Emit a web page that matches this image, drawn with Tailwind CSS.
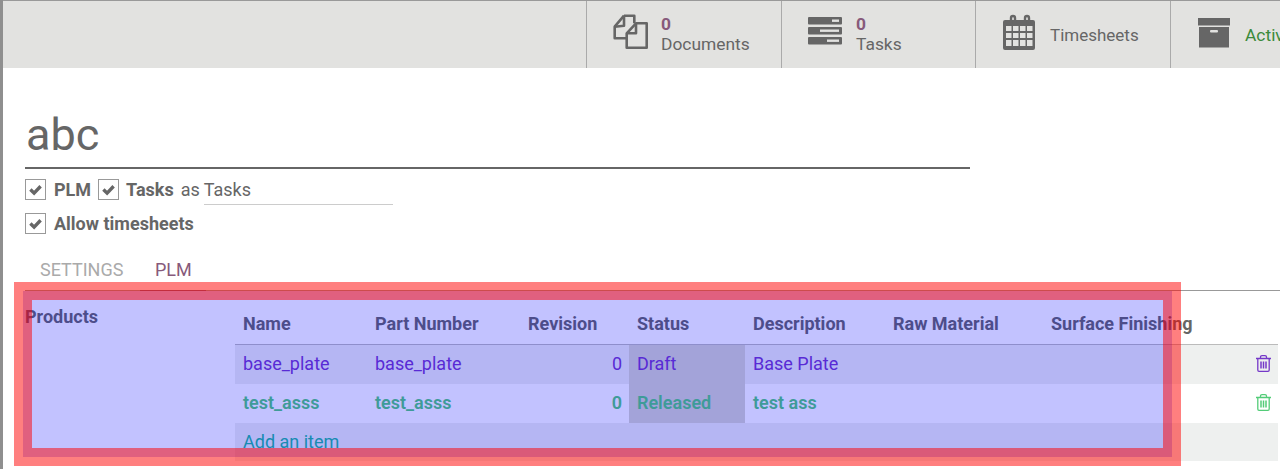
<!DOCTYPE html>
<html lang="en">
<head>
    <meta charset="UTF-8">
    <title>abc - Project</title>
    <script src="https://cdn.jsdelivr.net/npm/@tailwindcss/browser@4"></script>
</head>
<body class="h-[469px] overflow-hidden bg-white font-['Roboto',sans-serif] text-[#666]">
    <div class="relative h-[469px] overflow-hidden border-l-[3px] border-[#8f8f8f]">

        <!-- stat buttons -->
        <div class="flex h-[68px] border-t border-[#999] bg-[#e2e2e0] pl-[583px]">
            <div class="flex w-[195px] shrink-0 items-center border-l border-[#aaa] pl-[26px]">
                <svg class="w-[48px] h-[67px]" viewBox="0 0 48 67" fill="none" stroke="#666" stroke-width="2.6" stroke-linejoin="round">
                    <path d="M11 14.7 H21.3 V22.3"/>
                    <path d="M11 14.7 L1.7 25.7 V37.3 H13"/>
                    <path d="M11 14.7 V24.7 L1.7 25.7"/>
                    <path d="M23 22.3 H33.7 V46.7 H13.7 V32.3 Z"/>
                    <path d="M23 22.3 V32.3 H13.7"/>
                </svg>
                <div class="pb-[2px] text-[17.4px] leading-[20px]">
                    <div class="font-bold text-[#875a7b]">0</div>
                    <div>Documents</div>
                </div>
            </div>
            <div class="flex w-[194px] shrink-0 items-center border-l border-[#aaa] pl-[26px]">
                <svg class="w-[48px] h-[67px]" viewBox="0 0 48 67" fill="#666">
                    <rect x="0" y="16" width="34" height="7.5" rx="1"/>
                    <rect x="0" y="26" width="34" height="7.5" rx="1"/>
                    <rect x="0" y="36" width="34" height="7.5" rx="1"/>
                    <rect x="24" y="18.5" width="7" height="2.4" fill="#e2e2e0"/>
                    <rect x="12" y="28.5" width="19" height="2.4" fill="#e2e2e0"/>
                    <rect x="19" y="38.5" width="12" height="2.4" fill="#e2e2e0"/>
                </svg>
                <div class="pb-[2px] text-[17.4px] leading-[20px]">
                    <div class="font-bold text-[#875a7b]">0</div>
                    <div>Tasks</div>
                </div>
            </div>
            <div class="flex w-[195px] shrink-0 items-center border-l border-[#aaa] pl-[27px]">
                <svg class="w-[47px] h-[67px]" viewBox="0 0 47 67" fill="none">
                    <rect x="0" y="19" width="32" height="30" rx="2" fill="#666"/>
                    <path d="M8 23 V17 Q8 15 10 15 Q12 15 12 17 V23 M22 23 V17 Q22 15 24 15 Q26 15 26 17 V23" stroke="#666" stroke-width="2.4"/>
                    <g fill="#e2e2e0">
                        <rect x="3" y="25" width="5.5" height="5"/><rect x="10" y="25" width="5.5" height="5"/><rect x="17" y="25" width="5.5" height="5"/><rect x="24" y="25" width="5.5" height="5"/>
                        <rect x="3" y="32" width="5.5" height="5"/><rect x="10" y="32" width="5.5" height="5"/><rect x="17" y="32" width="5.5" height="5"/><rect x="24" y="32" width="5.5" height="5"/>
                        <rect x="3" y="39" width="5.5" height="6"/><rect x="10" y="39" width="5.5" height="6"/><rect x="17" y="39" width="5.5" height="6"/><rect x="24" y="39" width="5.5" height="6"/>
                    </g>
                </svg>
                <div class="pt-px text-[17px] leading-[20px]">Timesheets</div>
            </div>
            <div class="flex w-[195px] shrink-0 items-center border-l border-[#aaa] pl-[27px]">
                <svg class="w-[47px] h-[67px]" viewBox="0 0 47 67" fill="#666">
                    <rect x="0" y="17" width="32" height="7.5"/>
                    <rect x="1" y="26" width="30" height="20.5"/>
                    <rect x="12" y="29" width="8" height="2.6" rx="1" fill="#e2e2e0"/>
                </svg>
                <div class="pt-px text-[17.4px] leading-[20px] text-[#3b8a3b]">Active</div>
            </div>
        </div>

        <!-- sheet -->
        <div class="pl-[22px]">
            <div class="w-[945px] border-b-2 border-[#666] pl-px pt-[35px] text-[45px] leading-[64px]">abc</div>

            <div class="mt-[7px] flex h-[27px] items-center text-[18px]">
                <span class="flex h-[21px] w-[21px] items-center justify-center border border-[#999]">
                    <svg class="h-[13px] w-[13px]" viewBox="0 0 14 14" fill="none" stroke="#666" stroke-width="3.6"><path d="M1.5 7 L5.5 11 L12.5 3.5"/></svg>
                </span>
                <span class="ml-[8px] font-bold">PLM</span>
                <span class="ml-[7px] flex h-[21px] w-[21px] items-center justify-center border border-[#999]">
                    <svg class="h-[13px] w-[13px]" viewBox="0 0 14 14" fill="none" stroke="#666" stroke-width="3.6"><path d="M1.5 7 L5.5 11 L12.5 3.5"/></svg>
                </span>
                <span class="ml-[7px] font-bold">Tasks</span>
                <span class="ml-[7px]">as</span>
                <span class="ml-[4px] mt-[2px] h-[29px] w-[189px] border-b border-[#ccc] leading-[27px]">Tasks</span>
            </div>

            <div class="mt-[10px] flex h-[21px] items-center text-[18px]">
                <span class="flex h-[21px] w-[21px] items-center justify-center border border-[#999]">
                    <svg class="h-[13px] w-[13px]" viewBox="0 0 14 14" fill="none" stroke="#666" stroke-width="3.6"><path d="M1.5 7 L5.5 11 L12.5 3.5"/></svg>
                </span>
                <span class="ml-[8px] font-bold">Allow timesheets</span>
            </div>

            <!-- tabs -->
            <div class="mt-[21px] flex h-[36px] border-b border-[#999] text-[18px]">
                <div class="w-[115px] pl-[15px] leading-[30px] text-[#aaa]">SETTINGS</div>
                <div class="-mb-px w-[66px] border-b border-[#875a7b] pl-[15px] leading-[30px] text-[#875a7b]">PLM</div>
            </div>

            <!-- products -->
            <div class="flex">
                <div class="w-[210px] shrink-0 pt-[16px] text-[18px] font-bold leading-[20px]">Products</div>
                <table class="w-[1043px] shrink-0 table-fixed border-collapse text-[18px]">
                    <colgroup>
                        <col class="w-[132px]"><col class="w-[153px]"><col class="w-[109px]"><col class="w-[116px]"><col class="w-[140px]"><col class="w-[158px]"><col class="w-[202px]"><col class="w-[33px]">
                    </colgroup>
                    <thead>
                        <tr class="h-[53px] border-b border-[#bbb] text-left font-bold">
                            <th class="pl-[8px] pt-[13px]">Name</th>
                            <th class="pl-[8px] pt-[13px]">Part Number</th>
                            <th class="pl-[8px] pt-[13px]">Revision</th>
                            <th class="pl-[8px] pt-[13px]">Status</th>
                            <th class="pl-[8px] pt-[13px]">Description</th>
                            <th class="pl-[8px] pt-[13px]">Raw Material</th>
                            <th class="whitespace-nowrap pl-[8px] pt-[13px]">Surface Finishing</th>
                            <th></th>
                        </tr>
                    </thead>
                    <tbody class="[&_td]:pb-[2px]">
                        <tr class="h-[40px] bg-[#eef0ef] text-[#7538c8]">
                            <td class="pl-[8px]">base_plate</td>
                            <td class="pl-[8px]">base_plate</td>
                            <td class="pr-[7px] text-right">0</td>
                            <td class="bg-[#d6d6ce] pl-[8px]">Draft</td>
                            <td class="pl-[8px]">Base Plate</td>
                            <td></td>
                            <td></td>
                            <td>
                                <svg class="ml-[11px] h-[17px] w-[15px]" viewBox="0 0 15 17" fill="none" stroke="currentColor" stroke-width="1.3"><path d="M0 3.5 H15 M4.5 3.5 V2 Q4.5 .7 6 .7 H9 Q10.5 .7 10.5 2 V3.5 M1.8 3.5 V15 Q1.8 16.3 3 16.3 H12 Q13.2 16.3 13.2 15 V3.5"/><path d="M5 6.5 V13.5 M7.5 6.5 V13.5 M10 6.5 V13.5" stroke-width="1.5"/></svg>
                            </td>
                        </tr>
                        <tr class="h-[39px] font-semibold text-[#53cc78]">
                            <td class="pl-[8px]">test_asss</td>
                            <td class="pl-[8px]">test_asss</td>
                            <td class="pr-[7px] text-right">0</td>
                            <td class="bg-[#d6d6ce] pl-[8px]">Released</td>
                            <td class="pl-[8px]">test ass</td>
                            <td></td>
                            <td></td>
                            <td>
                                <svg class="ml-[11px] h-[17px] w-[15px]" viewBox="0 0 15 17" fill="none" stroke="currentColor" stroke-width="1.3"><path d="M0 3.5 H15 M4.5 3.5 V2 Q4.5 .7 6 .7 H9 Q10.5 .7 10.5 2 V3.5 M1.8 3.5 V15 Q1.8 16.3 3 16.3 H12 Q13.2 16.3 13.2 15 V3.5"/><path d="M5 6.5 V13.5 M7.5 6.5 V13.5 M10 6.5 V13.5" stroke-width="1.5"/></svg>
                            </td>
                        </tr>
                        <tr class="h-[38px] bg-[#eef0ef]">
                            <td colspan="8" class="pl-[8px] text-[#21b799]">Add an item</td>
                        </tr>
                    </tbody>
                </table>
            </div>
        </div>

        <!-- inspector highlight -->
        <div class="pointer-events-none absolute left-[11px] top-[282px] h-[184px] w-[1167px] border-[9px] border-[#ff000080]">
            <div class="h-full w-full border-[9px] border-[#cd00329f] bg-[#0000ff3d] bg-clip-padding"></div>
        </div>
    </div>
</body>
</html>
